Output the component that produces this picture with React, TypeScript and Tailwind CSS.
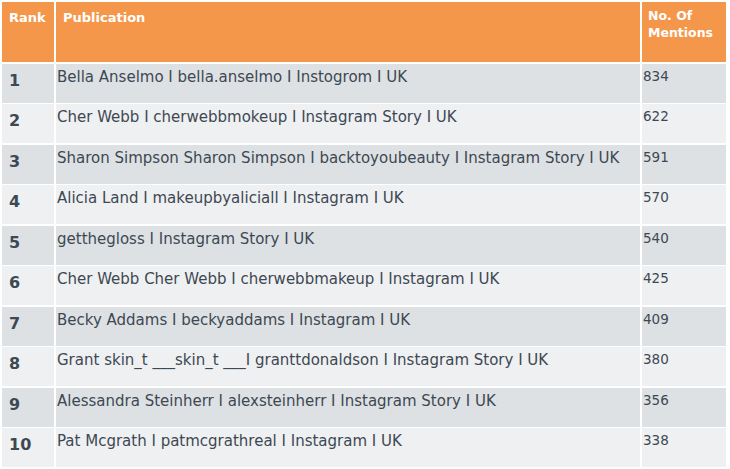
const rows: [string, string, number][] = [
  ['1', 'Bella Anselmo I bella.anselmo I Instogrom I UK', 834],
  ['2', 'Cher Webb I cherwebbmokeup I Instagram Story I UK', 622],
  ['3', 'Sharon Simpson Sharon Simpson I backtoyoubeauty I Instagram Story I UK', 591],
  ['4', 'Alicia Land I makeupbyaliciall I Instagram I UK', 570],
  ['5', 'getthegloss I Instagram Story I UK', 540],
  ['6', 'Cher Webb Cher Webb I cherwebbmakeup I Instagram I UK', 425],
  ['7', 'Becky Addams I beckyaddams I Instagram I UK', 409],
  ['8', 'Grant skin_t ___skin_t ___I granttdonaldson I Instagram Story I UK', 380],
  ['9', 'Alessandra Steinherr I alexsteinherr I Instagram Story I UK', 356],
  ['10', 'Pat Mcgrath I patmcgrathreal I Instagram I UK', 338],
];

export default function App() {
  return (
    <div className="h-[469px] w-[730px] bg-white p-[2px] font-['DejaVu_Sans',sans-serif] text-[#3d4852]">
      <div className="grid w-[724px] grid-cols-[52px_584px_1fr] grid-rows-[60px_repeat(10,39px)] gap-x-[2px] gap-y-[1.5px]">
        <div className="bg-[#f4974a] px-[7px] pt-[6px] text-[13px] font-bold text-white">Rank</div>
        <div className="bg-[#f4974a] px-[7px] pt-[6px] text-[13px] font-bold text-white">Publication</div>
        <div className="bg-[#f4974a] px-[6px] pt-[5px] text-[12.5px] font-bold leading-[17px] text-white">
          No. Of
          <br />
          Mentions
        </div>
        {rows.map(([rank, pub, count], i) => {
          const bg = i % 2 === 0 ? 'bg-[#dee1e4]' : 'bg-[#eff0f2]';
          return [
            <div key={`r${rank}`} className={`${bg} px-[7px] pt-[5px] text-[16px] font-bold`}>
              {rank}
            </div>,
            <div key={`p${rank}`} className={`${bg} whitespace-nowrap px-[1px] pt-[2px] text-[15px]`}>
              {pub}
            </div>,
            <div key={`c${rank}`} className={`${bg} px-[1px] pt-[2px] text-[13.5px]`}>
              {count}
            </div>,
          ];
        })}
      </div>
    </div>
  );
}
